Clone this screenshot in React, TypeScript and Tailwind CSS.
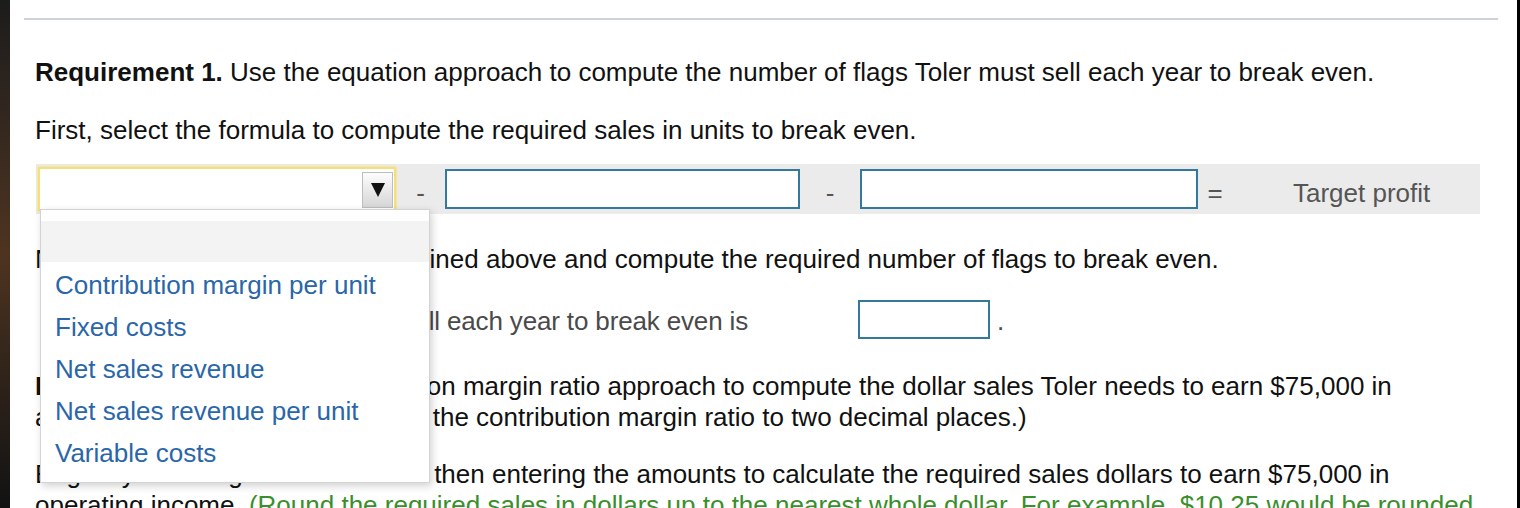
const options = [
  "Contribution margin per unit",
  "Fixed costs",
  "Net sales revenue",
  "Net sales revenue per unit",
  "Variable costs",
];

function FormulaSelect() {
  return (
    <div className="relative ml-[2px] flex h-[44px] w-[358px] shrink-0 items-center justify-end border-2 border-[#f5df78] bg-white shadow-[0_0_3px_#f5df78]">
      <div className="mr-[1px] mt-[2px] flex h-[36px] w-[31px] items-center justify-center border border-[#bdbdbd] bg-linear-to-b from-[#fdfdfd] to-[#d6d6d6]">
        <svg width="14" height="14" viewBox="0 0 14 14">
          <polygon points="0,0 14,0 7,14" fill="#111" />
        </svg>
      </div>

      {/* open option list */}
      <div className="absolute left-0 top-[40px] z-10 w-[390px] border border-[#d3d3d3] bg-white pb-[10px] pt-[11px] shadow-[2px_3px_8px_rgba(0,0,0,0.18)]">
        <div className="h-[41px] bg-[#f3f3f3]" />
        {options.map((o) => (
          <div key={o} className="flex h-[42px] items-center pl-[14px] pt-[4px] text-[#2a66a8]">
            {o}
          </div>
        ))}
      </div>
    </div>
  );
}

export default function App() {
  return (
    <div className="flex h-[508px] w-[1520px] overflow-hidden bg-white font-['Liberation_Sans',Arial,sans-serif] text-[26px] leading-[31px] text-[#111]">
      <div className="w-[10px] shrink-0 bg-linear-to-b from-[#1c1c1c] via-[#4e3420] to-[#121212]" />

      <main className="relative flex-1">
        <div className="ml-[14px] mr-[19px] mt-[18px] h-[2px] bg-[#cfd1dc]" />

        <div className="pl-[25px]">
          <p className="mt-[37px] whitespace-nowrap">
            <span className="font-bold">Requirement 1.</span> Use the equation approach to compute the number of flags
            Toler must sell each year to break even.
          </p>
          <p className="mt-[27px] whitespace-nowrap">
            First, select the formula to compute the required sales in units to break even.
          </p>

          <div className="ml-[1px] mt-[18px] flex h-[50px] w-[1444px] items-center bg-[#ebebeb]">
            <FormulaSelect />
            <span className="w-[49px] pt-[8px] text-center text-[#555]">-</span>
            <div className="h-[40px] w-[355px] shrink-0 border-2 border-[#34789a] bg-white" />
            <span className="w-[60px] pt-[8px] text-center text-[#555]">-</span>
            <div className="h-[40px] w-[338px] shrink-0 border-2 border-[#34789a] bg-white" />
            <span className="w-[34px] pt-[8px] text-center text-[#555]">=</span>
            <span className="ml-[61px] pt-[8px] text-[#555]">Target profit</span>
          </div>

          <p className="mt-[30px] whitespace-nowrap">
            Now, use the equation you determined above and compute the required number of flags to break even.
          </p>

          <div className="mt-[24px] flex h-[40px] items-center text-[#4a4a4a]">
            <span className="w-[823px] whitespace-nowrap pl-[6px] pt-[4px] tracking-[-0.15px]">
              The number of flags Toler must sell each year to break even is
            </span>
            <div className="h-[39px] w-[132px] border-2 border-[#34789a] bg-white" />
            <span className="ml-[7px] pt-[4px]">.</span>
          </div>

          <p className="mt-[32px] whitespace-nowrap">
            <span className="font-bold tracking-[-0.4px]">Requirement 2.</span> Use the contribution margin ratio
            approach to compute the dollar sales Toler needs to earn $75,000 in
            <br />
            <span className="tracking-[0.2px]">annual operating income. (Roun</span>d the contribution margin ratio to
            two decimal places.)
          </p>

          <p className="mt-[26px] whitespace-nowrap">
            <span className="tracking-[-0.2px]">Begin by selecting the formula and </span>then entering the amounts to
            calculate the required sales dollars to earn $75,000 in
            <br />
            operating income.{" "}
            <span className="text-[#3a8f2c]">
              (Round the required sales in dollars up to the nearest whole dollar. For example, $10.25 would be rounded
            </span>
          </p>
        </div>
      </main>

      <div className="w-[3px] shrink-0 bg-black" />
    </div>
  );
}
